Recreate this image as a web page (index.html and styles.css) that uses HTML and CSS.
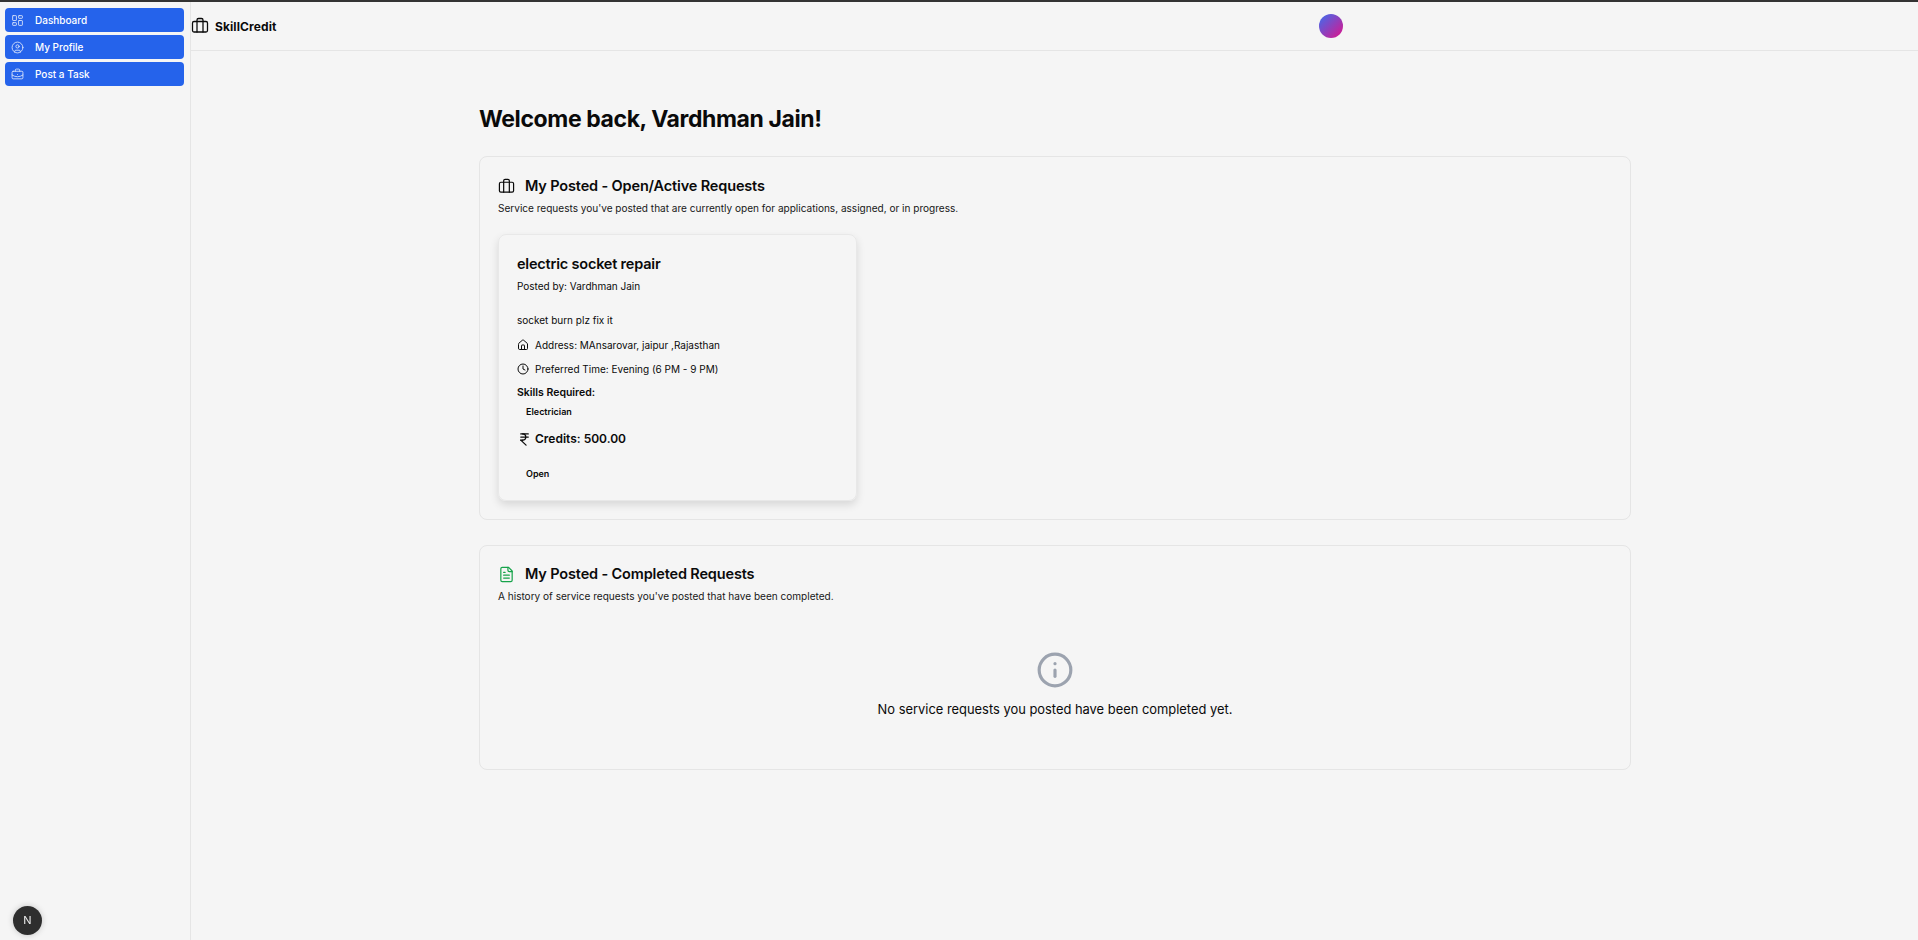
FILE: index.html
```html
<!DOCTYPE html>
<html lang="en">
<head>
    <meta charset="UTF-8">
    <meta name="viewport" content="width=device-width, initial-scale=1.0">
    <title>SkillCredit</title>
    <link rel="stylesheet" href="styles.css">
</head>
<body>
    <div class="layout">
        <aside class="sidebar">
            <a class="nav-item">
                <svg class="nav-icon" viewBox="0 0 24 24"><rect x="3" y="3" width="7" height="9" rx="1"/><rect x="14" y="3" width="7" height="5" rx="1"/><rect x="14" y="12" width="7" height="9" rx="1"/><rect x="3" y="16" width="7" height="5" rx="1"/></svg>
                <span>Dashboard</span>
            </a>
            <a class="nav-item">
                <svg class="nav-icon" viewBox="0 0 24 24"><circle cx="12" cy="12" r="10"/><circle cx="12" cy="10" r="3"/><path d="M7 20.662V19a2 2 0 0 1 2-2h6a2 2 0 0 1 2 2v1.662"/></svg>
                <span>My Profile</span>
            </a>
            <a class="nav-item">
                <svg class="nav-icon" viewBox="0 0 24 24"><path d="M12 12h.01"/><path d="M16 6V4a2 2 0 0 0-2-2h-4a2 2 0 0 0-2 2v2"/><path d="M22 13a18 18 0 0 1-20 0"/><rect x="2" y="6" width="20" height="14" rx="2"/></svg>
                <span>Post a Task</span>
            </a>
        </aside>

        <div class="page">
            <header class="topbar">
                <div class="brand">
                    <svg class="brand-icon" viewBox="0 0 24 24"><path d="M16 20V4a2 2 0 0 0-2-2h-4a2 2 0 0 0-2 2v16"/><rect x="2" y="6" width="20" height="14" rx="2"/></svg>
                    <span>SkillCredit</span>
                </div>
                <div class="avatar"></div>
            </header>

            <main class="content">
                <h1>Welcome back, Vardhman Jain!</h1>

                <section class="panel panel-open">
                    <h2>
                        <svg class="title-icon" viewBox="0 0 24 24"><path d="M16 20V4a2 2 0 0 0-2-2h-4a2 2 0 0 0-2 2v16"/><rect x="2" y="6" width="20" height="14" rx="2"/></svg>
                        My Posted - Open/Active Requests
                    </h2>
                    <p class="panel-desc">Service requests you've posted that are currently open for applications, assigned, or in progress.</p>

                    <article class="task-card">
                        <h3>electric socket repair</h3>
                        <p class="posted-by">Posted by: Vardhman Jain</p>
                        <p class="task-desc">socket burn plz fix it</p>
                        <div class="task-line task-line-address">
                            <svg class="line-icon" viewBox="0 0 24 24"><path d="M15 21v-8a1 1 0 0 0-1-1h-4a1 1 0 0 0-1 1v8"/><path d="M3 10a2 2 0 0 1 .709-1.528l7-5.999a2 2 0 0 1 2.582 0l7 5.999A2 2 0 0 1 21 10v9a2 2 0 0 1-2 2H5a2 2 0 0 1-2-2z"/></svg>
                            <span>Address: MAnsarovar, jaipur ,Rajasthan</span>
                        </div>
                        <div class="task-line">
                            <svg class="line-icon" viewBox="0 0 24 24"><circle cx="12" cy="12" r="10"/><polyline points="12 6 12 12 16 14"/></svg>
                            <span>Preferred Time: Evening (6 PM - 9 PM)</span>
                        </div>
                        <div class="skills-label">Skills Required:</div>
                        <div class="tag tag-skill">Electrician</div>
                        <div class="credits">
                            <svg class="credits-icon" viewBox="0 0 24 24"><path d="M6 3h12"/><path d="M6 8h12"/><path d="m6 13 8.5 8"/><path d="M6 13h3"/><path d="M9 13c6.667 0 6.667-10 0-10"/></svg>
                            <span>Credits: 500.00</span>
                        </div>
                        <div class="tag tag-status">Open</div>
                    </article>
                </section>

                <section class="panel panel-done">
                    <h2>
                        <svg class="title-icon green" viewBox="0 0 24 24"><path d="M15 2H6a2 2 0 0 0-2 2v16a2 2 0 0 0 2 2h12a2 2 0 0 0 2-2V7Z"/><path d="M14 2v4a2 2 0 0 0 2 2h4"/><path d="M10 9H8"/><path d="M16 13H8"/><path d="M16 17H8"/></svg>
                        My Posted - Completed Requests
                    </h2>
                    <p class="panel-desc">A history of service requests you've posted that have been completed.</p>
                    <div class="empty">
                        <svg class="empty-icon" viewBox="0 0 24 24"><circle cx="12" cy="12" r="10"/><path d="M12 16v-4"/><path d="M12 8h.01"/></svg>
                        <p>No service requests you posted have been completed yet.</p>
                    </div>
                </section>
            </main>
        </div>
    </div>

    <div class="dev-badge">N</div>
</body>
</html>
```

FILE: styles.css
```css
* {
    box-sizing: border-box;
}
body {
    margin: 0;
    height: 940px;
    overflow: hidden;
    font-family: Inter, "Noto Sans", sans-serif;
    background-color: #f5f5f5;
    color: #0a0a0a;
    border-top: 2px solid #333;
}
svg {
    fill: none;
    stroke: currentColor;
    stroke-width: 2;
    stroke-linecap: round;
    stroke-linejoin: round;
    flex-shrink: 0;
}
p, h1, h2, h3 {
    margin: 0;
}
.layout {
    display: flex;
    height: 938px;
}
.sidebar {
    width: 191px;
    padding: 6px 6px 0 5px;
    border-right: 1px solid #e5e5e5;
    display: flex;
    flex-direction: column;
    gap: 3px;
}
.nav-item {
    display: flex;
    align-items: center;
    gap: 11px;
    height: 24px;
    padding-left: 6px;
    background-color: #2563eb;
    color: #fff;
    border-radius: 4px;
    font-size: 10px;
    font-weight: 500;
}
.nav-icon {
    width: 13px;
    height: 13px;
    stroke-width: 1.6;
    opacity: 0.85;
}
.page {
    flex: 1;
    min-width: 0;
}
.topbar {
    height: 49px;
    display: flex;
    align-items: center;
    border-bottom: 1px solid #e5e5e5;
}
.brand {
    display: flex;
    align-items: center;
    gap: 6px;
    width: 1128px;
    font-size: 12px;
    letter-spacing: 0.1px;
    font-weight: 700;
}
.brand-icon {
    width: 18px;
    height: 18px;
    stroke-width: 1.7;
}
.avatar {
    width: 24px;
    height: 24px;
    border-radius: 50%;
    background: linear-gradient(135deg, #3b6ff0, #e0128a);
}
.content {
    width: 1152px;
    margin-left: 288px;
    padding-top: 53px;
}
h1 {
    font-size: 23px;
    letter-spacing: -0.4px;
    line-height: 30px;
    font-weight: 700;
    margin-bottom: 22px;
}
.panel {
    border: 1px solid #e5e5e5;
    border-radius: 8px;
    padding: 19px 18px 0;
}
.panel-open {
    height: 364px;
    margin-bottom: 25px;
}
.panel-done {
    height: 225px;
    padding-top: 18px;
}
h2 {
    display: flex;
    align-items: center;
    gap: 10px;
    font-size: 14.5px;
    letter-spacing: -0.15px;
    line-height: 20px;
    font-weight: 600;
}
.title-icon {
    width: 17px;
    height: 17px;
    stroke-width: 1.7;
}
.green {
    color: #16a34a;
}
.panel-desc {
    font-size: 10.05px;
    line-height: 14px;
    margin-top: 5px;
    color: #171717;
}
.task-card {
    width: 359px;
    height: 267px;
    margin-top: 19px;
    padding: 19px 18px 0;
    border: 1px solid #e8e8e8;
    border-radius: 8px;
    box-shadow: 0 4px 8px rgba(0, 0, 0, 0.12);
}
h3 {
    font-size: 14.5px;
    letter-spacing: -0.2px;
    line-height: 20px;
    font-weight: 600;
}
.posted-by {
    font-size: 10px;
    line-height: 14px;
    margin-top: 5px;
}
.task-desc {
    font-size: 10px;
    line-height: 14px;
    margin-top: 20px;
}
.task-line {
    display: flex;
    align-items: center;
    gap: 6px;
    font-size: 10px;
    line-height: 14px;
    margin-top: 10px;
}
.task-line-address {
    margin-top: 11px;
}
.line-icon {
    width: 12px;
    height: 12px;
}
.skills-label {
    font-size: 10.5px;
    line-height: 14px;
    font-weight: 600;
    margin-top: 10px;
}
.tag {
    font-size: 9px;
    line-height: 12px;
    font-weight: 600;
    padding-left: 9px;
}
.tag-skill {
    margin-top: 6px;
}
.credits {
    display: flex;
    align-items: center;
    gap: 3px;
    font-size: 12px;
    line-height: 16px;
    font-weight: 600;
    margin-top: 13px;
}
.credits-icon {
    width: 15px;
    height: 15px;
}
.tag-status {
    margin-top: 21px;
}
.empty {
    display: flex;
    flex-direction: column;
    align-items: center;
    margin-top: 48px;
}
.empty-icon {
    width: 38px;
    height: 38px;
    color: #9ca3af;
    stroke-width: 2;
}
.empty p {
    font-size: 12.9px;
    line-height: 18px;
    margin-top: 12px;
}
.dev-badge {
    position: fixed;
    left: 13px;
    top: 906px;
    width: 29px;
    height: 29px;
    border-radius: 50%;
    background-color: #2e2e2e;
    color: #eee;
    font-size: 11px;
    line-height: 29px;
    text-align: center;
    box-shadow: 0 0 6px rgba(0, 0, 0, 0.2);
}
```
